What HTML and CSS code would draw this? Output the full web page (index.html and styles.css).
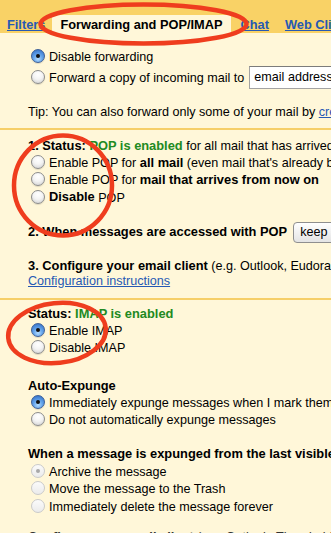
FILE: index.html
```html
<!DOCTYPE html>
<html>
<head>
<meta charset="utf-8">
<link rel="stylesheet" href="styles.css">
</head>
<body>
<div class="page">
  <nav class="tabs">
    <a class="tab link">Filters</a>
    <span class="tab active">Forwarding and POP/IMAP</span>
    <a class="tab link chat">Chat</a>
    <a class="tab link web">Web Clips</a>
  </nav>

  <section class="sec fwd">
    <div class="rrow"><span class="radio on"></span>Disable forwarding</div>
    <div class="rrow tall"><span class="radio"></span>Forward a copy of incoming mail to <span class="field">email address</span> and</div>
    <p class="line tip">Tip: You can also forward only some of your mail by <a class="link">creating a filter!</a></p>
  </section>
  <div class="divider"></div>

  <section class="sec pop">
    <p class="line"><b>1. Status: <span class="green">POP is enabled</span></b> for all mail that has arrived since 3/20/09</p>
    <div class="rrow"><span class="radio"></span>Enable POP for&nbsp;<b>all mail</b>&nbsp;(even mail that's already been downloaded)</div>
    <div class="rrow"><span class="radio"></span>Enable POP for&nbsp;<b>mail that arrives from now on</b></div>
    <div class="rrow"><span class="radio"></span><b>Disable</b>&nbsp;POP</div>
    <div class="selrow"><b>2. When messages are accessed with POP</b><span class="select">keep Gmail's copy in the Inbox</span></div>
    <p class="line conf"><b>3. Configure your email client</b> (e.g. Outlook, Eudora, Netscape Mail)</p>
    <p class="line"><a class="link">Configuration instructions</a></p>
  </section>
  <div class="divider"></div>

  <section class="sec imap">
    <p class="line"><b>Status: <span class="green">IMAP is enabled</span></b></p>
    <div class="rrow"><span class="radio on"></span>Enable IMAP</div>
    <div class="rrow"><span class="radio"></span>Disable IMAP</div>
    <p class="line head first-head"><b>Auto-Expunge</b></p>
    <div class="rrow"><span class="radio on"></span>Immediately expunge messages when I mark them deleted in IMAP</div>
    <div class="rrow"><span class="radio"></span>Do not automatically expunge messages</div>
    <p class="line head second-head"><b>When a message is expunged from the last visible IMAP folder:</b></p>
    <div class="rrow after-head"><span class="radio dis on"></span>Archive the message</div>
    <div class="rrow"><span class="radio dis"></span>Move the message to the Trash</div>
    <div class="rrow"><span class="radio dis"></span>Immediately delete the message forever</div>
    <p class="line last"><b>Configure your email client</b> (e.g. Outlook, Thunderbird, iPhone)</p>
  </section>

  <svg class="marks" width="331" height="533" viewBox="0 0 331 533">
    <ellipse cx="143.5" cy="24" rx="103" ry="19.5" />
    <ellipse cx="63" cy="185.5" rx="49" ry="50" />
    <ellipse cx="57" cy="333" rx="49" ry="30" transform="rotate(-6 57 333)" />
  </svg>
</div>
</body>
</html>
```

FILE: styles.css
```css
html, body {
  margin: 0;
  padding: 0;
}

body {
  width: 331px;
  height: 533px;
  overflow: hidden;
  background: #fff7d9;
  font-family: "Liberation Sans", Arial, sans-serif;
  font-size: 12.6px;
  color: #000;
}

b {
  font-size: 1.02em;
  line-height: 1;
}

.page {
  position: relative;
  width: 331px;
  height: 533px;
  overflow: hidden;
}

.tabs {
  display: flex;
  align-items: flex-end;
  height: 33px;
  box-sizing: border-box;
  padding-left: 7px;
  background: #f9d266;
  white-space: nowrap;
}

.tab {
  font-weight: bold;
  font-size: 12.8px;
  line-height: 15px;
  padding: 2px 0 1px;
}

.link {
  color: #2659b4;
  text-decoration: underline;
}

.tab.active {
  background: #fff7d9;
  padding: 2px 8px 1px;
  margin-left: 7px;
}

.tab.chat {
  margin-left: 10px;
}

.tab.web {
  margin-left: 16px;
}

.sec {
  padding-left: 28px;
  white-space: nowrap;
}

.line {
  margin: 0;
  height: 15px;
  line-height: 15px;
}

.rrow {
  display: flex;
  align-items: center;
  height: 17.4px;
}

.rrow.tall {
  height: 23px;
  margin-top: 1px;
}

.fwd {
  padding-top: 15px;
  padding-bottom: 8px;
}

.tip {
  margin-top: 16px;
}

.divider {
  height: 2px;
  background: #f6cf68;
}

.pop {
  padding-top: 9px;
  padding-bottom: 9px;
}

.imap {
  padding-top: 7.5px;
}

.green {
  color: #228a22;
}

.radio {
  position: relative;
  flex: none;
  width: 14px;
  height: 14px;
  box-sizing: border-box;
  margin: 0 4px 0 3px;
  border-radius: 50%;
  border: 1px solid #8c8c8c;
  background: radial-gradient(circle at 50% 30%, #ffffff 0%, #f4f4f4 45%, #cdcdcd 100%);
  box-shadow: 0 1px 1px rgba(0, 0, 0, 0.12);
  transform: translateY(-1px);
}

.radio.on {
  border-color: #3b5e97;
  background: radial-gradient(circle at 50% 75%, #b4dcff 0%, #66a6ec 40%, #2a67c2 100%);
}

.radio.on::after {
  content: "";
  position: absolute;
  left: 4px;
  top: 4px;
  width: 4px;
  height: 4px;
  border-radius: 50%;
  background: #101010;
}

.radio.dis {
  border-color: #cacaca;
  background: linear-gradient(#fbfbfb, #ebebeb);
  box-shadow: none;
}

.radio.dis.on::after {
  background: #a8a8a8;
}

.field {
  display: inline-block;
  height: 23px;
  box-sizing: border-box;
  margin-left: 5px;
  padding: 0 4px;
  line-height: 21px;
  background: #fff;
  border: 1px solid #a3a3a3;
  border-top-color: #7c7c7c;
}

.selrow {
  display: flex;
  align-items: center;
  height: 21px;
  margin-top: 15px;
}

.select {
  display: inline-block;
  height: 21px;
  box-sizing: border-box;
  margin-left: 6px;
  padding: 0 6px;
  line-height: 19px;
  border: 1px solid #8f8f8f;
  border-radius: 4px;
  background: linear-gradient(#ffffff, #e4e4e4);
}

.conf {
  margin-top: 16px;
}

.first-head {
  margin-top: 22px;
}

.second-head {
  margin-top: 18px;
}

.after-head {
  margin-top: 1.5px;
}

.last {
  margin-top: 15px;
  color: #333;
}

.marks {
  position: absolute;
  left: 0;
  top: 0;
  pointer-events: none;
}

.marks ellipse {
  fill: none;
  stroke: #ef3d1e;
  stroke-width: 4.5;
}
```
